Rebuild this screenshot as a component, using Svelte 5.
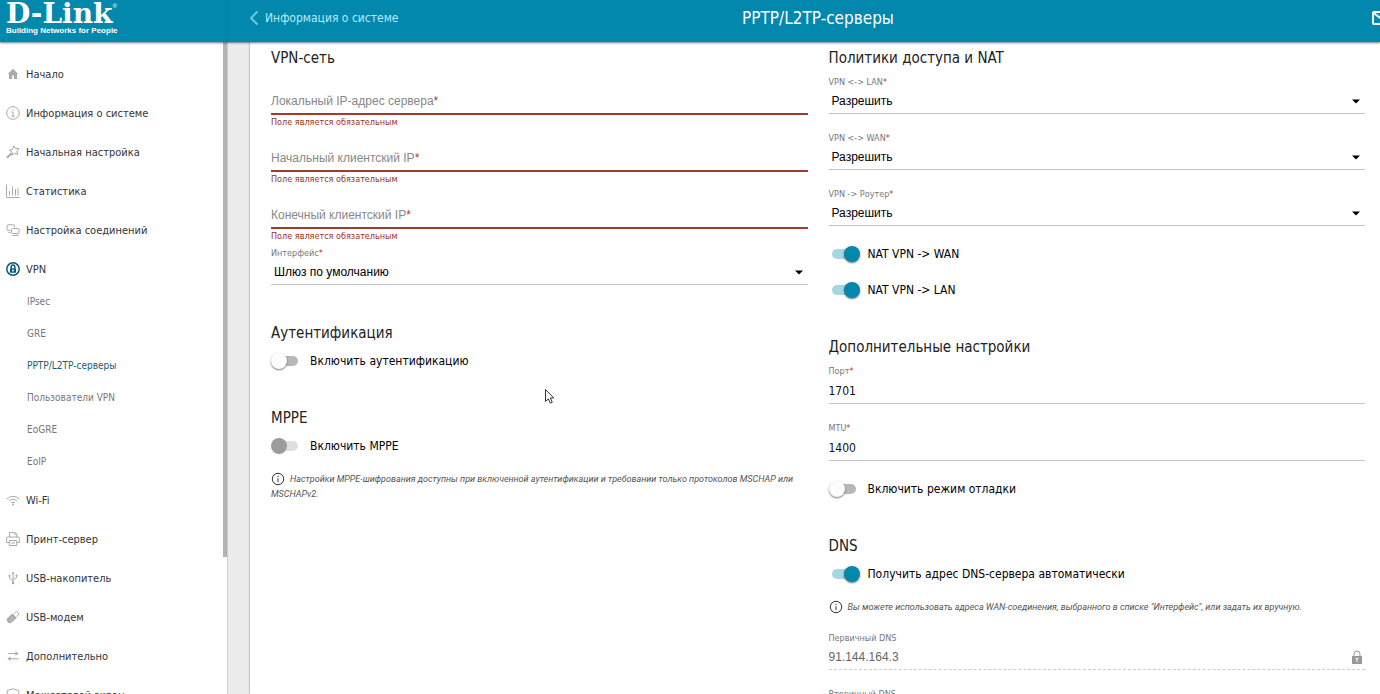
<script>
  const menu = [
    { text: 'Начало', icon: 'home' },
    { text: 'Информация о системе', icon: 'info' },
    { text: 'Начальная настройка', icon: 'wand' },
    { text: 'Статистика', icon: 'stats' },
    { text: 'Настройка соединений', icon: 'links' },
    {
      text: 'VPN',
      icon: 'vpn',
      children: ['IPsec', 'GRE', 'PPTP/L2TP-серверы', 'Пользователи VPN', 'EoGRE', 'EoIP']
    },
    { text: 'Wi-Fi', icon: 'wifi' },
    { text: 'Принт-сервер', icon: 'printer' },
    { text: 'USB-накопитель', icon: 'usb' },
    { text: 'USB-модем', icon: 'modem' },
    { text: 'Дополнительно', icon: 'arrows' },
    { text: 'Межсетевой экран', icon: 'shield' }
  ];
  const current = 'PPTP/L2TP-серверы';

  const addresses = $state([
    { id: 'local-ip', label: 'Локальный IP-адрес сервера', value: '' },
    { id: 'first-ip', label: 'Начальный клиентский IP', value: '' },
    { id: 'last-ip', label: 'Конечный клиентский IP', value: '' }
  ]);
  const policies = [
    { id: 'lan', label: 'VPN <-> LAN' },
    { id: 'wan', label: 'VPN <-> WAN' },
    { id: 'router', label: 'VPN -> Роутер' }
  ];
</script>

{#snippet icon(name)}
  <svg class="icon" class:accent={name === 'vpn'} viewBox="0 0 14 14" aria-hidden="true">
    {#if name === 'home'}
      <path class="solid" d="M7 1.8 1.8 7H3v5h3V8.5h2V12h3V7h1.2z" />
    {:else if name === 'info'}
      <circle cx="7" cy="7" r="6.3" />
      <path d="M5.5 6H7v4.2M5.3 10.2h3.6M6.4 3.8h1.2" />
    {:else if name === 'wand'}
      <path d="m8 .8 1.500 2.500 3.500.2-2.200 2.700.9 3.200-3.100-1.100-2.600 2 .2-3.200L3.500 5.200l3.100-1z" />
      <path class="thick" d="M5.600 8.300 1 12.800" />
    {:else if name === 'stats'}
      <path d="M.5.5v13h13M3.5 7v4.5M6.5 2.5v9M9.5 5v6.500M12 4v7.500" />
    {:else if name === 'links'}
      <path d="M4.500 7.500H2.200A1.200 1.200 0 0 1 1 6.300V3a1.200 1.200 0 0 1 1.200-1.200h5A1.200 1.200 0 0 1 8.400 3v1M2.500 9.500h2" />
      <rect x="5.500" y="5.500" width="7.500" height="5" rx="1" />
      <path d="M6.500 12.500h6" />
    {:else if name === 'vpn'}
      <circle cx="7" cy="7" r="6.200" />
      <rect class="solid" x="4" y="6.300" width="6" height="4.500" rx=".6" />
      <path d="M5.200 6.500V4.800a1.800 1.800 0 0 1 3.600 0v1.700" />
      <path class="light" d="M7 7.500v2" />
    {:else if name === 'wifi'}
      <path d="M1 5.800a8.600 8.600 0 0 1 12 0M3 7.900a5.800 5.800 0 0 1 8 0M5 9.900a3 3 0 0 1 4 0" />
      <circle class="solid" cx="7" cy="11.500" r="1" />
    {:else if name === 'printer'}
      <path d="M3.500 5V.6h5.800l1.500 1.500V5M3 10.500H.6V6.200A1.200 1.200 0 0 1 1.800 5h10.400a1.200 1.200 0 0 1 1.200 1.200v4.300H11M3.300 8.500h7.400v5H3.300zM5 11h4M9 .8v1.500h1.600" />
    {:else if name === 'usb'}
      <path d="M7 1.500v10M3.500 5v2.200L7 9.800M10.500 4.500v2.200L7 8.500" />
      <path class="solid" d="M7 .5 5.700 2.700h2.600zM2.700 3.800h1.700v1.700H2.700zM9.700 3.500h1.700v1.700H9.700z" />
      <circle class="solid" cx="7" cy="12" r="1.300" />
    {:else if name === 'modem'}
      <path class="solid" d="M.8 8.700 6.500 3.500l4.200 4.200-5.800 5.300c-1.700 1.200-5.200-2.500-4.100-4.300z" />
      <path d="m8 3.800 2.600-2.500 2.600 2.700-2.700 2.500" />
      <path class="light" d="M3.700 9.700 4.700 10.700M5.700 7.500l1 1" />
    {:else if name === 'arrows'}
      <path d="M2 4.500h9M3 9.800h9.500" />
      <path class="solid" d="M9.500 2.200 12.500 4.500 9.500 6.800zM4.500 7.500 1.500 9.800l3 2.300z" />
    {:else if name === 'shield'}
      <path d="M7 .8 12.800 2.500c.3 5-1.200 8.500-5.800 10.700C2.400 11 .9 7.500 1.200 2.500z" />
    {/if}
  </svg>
{/snippet}

{#snippet caret()}
  <svg class="caret" viewBox="0 0 8 5" aria-hidden="true"><path d="M0 .5h8L4 4.500z" /></svg>
{/snippet}

{#snippet note(text)}
  <p class="note">
    <svg viewBox="0 0 14 14" aria-hidden="true">
      <circle cx="7" cy="7" r="5.700" />
      <path d="M7 6.300v3.900M7 3.800v1.400" />
    </svg>{text}
  </p>
{/snippet}

{#snippet toggle(text, checked, disabled = false)}
  <label class="toggle"><input type="checkbox" {checked} {disabled} /><span>{text}</span></label>
{/snippet}

<div class="page">
  <header>
    <a class="brand" href="#home">
      <span class="logo">D-Link<sup>®</sup></span>
      <span class="slogan">Building Networks for People</span>
    </a>
    <div class="bar">
      <a class="back" href="#system">
        <svg viewBox="0 0 10 16" aria-hidden="true"><path d="M8.500 1.500 2 8l6.500 6.500" /></svg>
        Информация о системе
      </a>
      <h1>PPTP/L2TP-серверы</h1>
      <button class="mail" aria-label="Уведомления">
        <svg viewBox="0 0 18 14" aria-hidden="true"><rect x="1" y="1" width="16" height="12" rx="1" /><path d="m1.500 2 7.500 5.500L16.500 2" /></svg>
      </button>
    </div>
  </header>

  <div class="body">
    <nav>
      <ul class="menu">
        {#each menu as item}
          <li>
            <a href="#{item.icon}">{@render icon(item.icon)}{item.text}</a>
            {#if item.children}
              <ul class="submenu">
                {#each item.children as child}
                  <li><a href="#{item.icon}" class:current={child === current}>{child}</a></li>
                {/each}
              </ul>
            {/if}
          </li>
        {/each}
      </ul>
      <div class="thumb"></div>
    </nav>

    <main>
      <div class="column">
        <section class="network">
          <h2>VPN-сеть</h2>
          <div class="addresses">
            {#each addresses as field}
              <div class="address">
                <div class="stack">
                  <input id={field.id} type="text" bind:value={field.value} />
                  {#if !field.value}
                    <label for={field.id}>{field.label}<b>*</b></label>
                  {/if}
                </div>
                <p class="error">Поле является обязательным</p>
              </div>
            {/each}
          </div>
          <div class="field">
            <label for="interface">Интерфейс<b>*</b></label>
            <div class="select">
              <select id="interface"><option>Шлюз по умолчанию</option></select>
              {@render caret()}
            </div>
          </div>
        </section>
        <section>
          <h2>Аутентификация</h2>
          {@render toggle('Включить аутентификацию', false)}
        </section>
        <section>
          <h2>MPPE</h2>
          {@render toggle('Включить MPPE', false, true)}
          {@render note('Настройки MPPE-шифрования доступны при включенной аутентификации и требовании только протоколов MSCHAP или MSCHAPv2.')}
        </section>
      </div>

      <div class="column">
        <section>
          <h2>Политики доступа и NAT</h2>
          <div class="fields">
            {#each policies as policy}
              <div class="field">
                <label for={policy.id}>{policy.label}<b>*</b></label>
                <div class="select">
                  <select id={policy.id}><option>Разрешить</option></select>
                  {@render caret()}
                </div>
              </div>
            {/each}
          </div>
          <div class="toggles">
            {@render toggle('NAT VPN -> WAN', true)}
            {@render toggle('NAT VPN -> LAN', true)}
          </div>
        </section>
        <section>
          <h2>Дополнительные настройки</h2>
          <div class="fields">
            <div class="field">
              <label for="port">Порт<b>*</b></label>
              <input id="port" type="text" value="1701" />
            </div>
            <div class="field">
              <label for="mtu">MTU<b>*</b></label>
              <input id="mtu" type="text" value="1400" />
            </div>
          </div>
          <div class="toggles">
            {@render toggle('Включить режим отладки', false)}
          </div>
        </section>
        <section>
          <h2>DNS</h2>
          {@render toggle('Получить адрес DNS-сервера автоматически', true)}
          {@render note('Вы можете использовать адреса WAN-соединения, выбранного в списке "Интерфейс", или задать их вручную.')}
          <div class="fields dns">
            <div class="field">
              <label for="dns1">Первичный DNS</label>
              <div class="locked">
                <input id="dns1" type="text" value="91.144.164.3" readonly />
                <svg viewBox="0 0 12 14" aria-hidden="true">
                  <path d="M3 6V4a3 3 0 0 1 6 0v2" />
                  <rect x="1" y="6" width="10" height="8" />
                  <path class="hole" d="M4.500 8.500h3M6 8.500V12" />
                </svg>
              </div>
            </div>
            <div class="field">
              <label for="dns2">Вторичный DNS</label>
              <div class="locked">
                <input id="dns2" type="text" value="" readonly />
              </div>
            </div>
          </div>
        </section>
      </div>
    </main>
  </div>

  <svg class="pointer" viewBox="0 0 12 18" aria-hidden="true">
    <path d="M1.500 1.500v12l2.800-2.600 2 4.300 2-1-2-4.200h3.500z" />
  </svg>
</div>

<style>
  :global(body) {
    margin: 0;
  }
  .page {
    display: flex;
    flex-direction: column;
    position: relative;
    height: 100vh;
    overflow: hidden;
    background: #ececec;
    color: #111;
    font-family: 'DejaVu Sans Condensed', 'DejaVu Sans', sans-serif;
    font-size: 12px;
  }
  h1,
  h2,
  p,
  ul {
    margin: 0;
    padding: 0;
    font-weight: 400;
  }
  ul {
    list-style: none;
  }
  a {
    color: inherit;
    text-decoration: none;
  }
  button,
  input,
  select {
    margin: 0;
    padding: 0;
    border: 0;
    border-radius: 0;
    outline: 0;
    background: none;
    color: inherit;
    font: inherit;
  }
  svg {
    fill: none;
    stroke: currentColor;
    flex: none;
  }

  header {
    display: flex;
    flex: none;
    height: 42px;
    background: #0288ad;
    color: #fff;
    box-shadow: 0 1px 2px rgb(0 40 60 / 60%);
    z-index: 2;
  }
  .brand {
    display: flex;
    flex-direction: column;
    box-sizing: border-box;
    width: 228px;
    padding-left: 6px;
    border-right: 1px solid #047b9e;
  }
  .logo {
    height: 24px;
    font: 700 28px/28px 'DejaVu Serif', serif;
  }
  .logo sup {
    font: 6px/6px 'Liberation Sans', sans-serif;
    vertical-align: 15px;
  }
  .slogan {
    font: 700 8px/13px 'Liberation Sans', sans-serif;
  }
  .bar {
    display: grid;
    grid-template-columns: 1fr auto 1fr;
    align-items: center;
    flex: 1;
    padding-left: 21px;
    padding-bottom: 6px;
    overflow: hidden;
  }
  .back {
    display: flex;
    align-items: center;
    gap: 6px;
    color: #b4ecfb;
    font-size: 12px;
  }
  .back svg {
    width: 10px;
    height: 16px;
    stroke: #6cc6e2;
    stroke-width: 2;
  }
  h1 {
    margin-left: 7px;
    font-size: 17px;
    line-height: 24px;
  }
  .mail {
    justify-self: end;
    display: flex;
    margin-right: -10px;
  }
  .mail svg {
    width: 18px;
    height: 14px;
    stroke-width: 2;
  }

  .body {
    display: flex;
    flex: 1;
    min-height: 0;
  }
  nav {
    display: flex;
    justify-content: space-between;
    align-items: flex-start;
    box-sizing: border-box;
    width: 228px;
    flex: none;
    background: #fff;
    border-right: 1px solid #ccc;
    color: #333;
    font-size: 11px;
  }
  .thumb {
    width: 4px;
    height: 79%;
    background: #b4b4b4;
  }
  .menu {
    display: flex;
    flex-direction: column;
    gap: 7px;
    padding: 16px 0 0 6px;
  }
  .menu a {
    display: flex;
    align-items: center;
    gap: 6px;
    height: 32px;
  }
  .submenu {
    padding-left: 21px;
    color: #777;
    font-size: 10px;
  }
  .submenu .current {
    color: #14606f;
  }
  .icon {
    width: 14px;
    height: 14px;
    color: #aaa;
  }
  .accent {
    color: #075a76;
    stroke-width: 1.500;
  }
  .solid {
    fill: currentColor;
    stroke: none;
  }
  .light {
    stroke: #fff;
  }
  .thick {
    stroke-width: 2;
  }

  main {
    display: grid;
    grid-template-columns: 1fr 1fr;
    gap: 21px;
    flex: 1;
    margin-left: 22px;
    padding: 4px 15px 0 21px;
    background: #fff;
    box-shadow: 0 0 2px rgb(0 0 0 / 45%);
  }
  .column {
    display: flex;
    flex-direction: column;
    gap: 33px;
    min-width: 0;
  }
  .network {
    padding-bottom: 3px;
  }
  h2 {
    margin-bottom: 4px;
    font-size: 15px;
    line-height: 24px;
    color: #222;
  }
  b {
    color: #b5382c;
    font-weight: 400;
  }
  .addresses {
    display: flex;
    flex-direction: column;
    gap: 16px;
    padding: 15px 0 2px;
  }
  .stack {
    display: grid;
    border-bottom: 2px solid #a03c2c;
  }
  .stack > * {
    grid-area: 1 / 1;
    font: 12px/24px 'Liberation Sans', sans-serif;
    height: 24px;
  }
  .stack label {
    color: #888;
    pointer-events: none;
  }
  .error {
    font-size: 9px;
    line-height: 15px;
    color: #993322;
  }
  .fields {
    display: flex;
    flex-direction: column;
    gap: 17px;
    padding-top: 1px;
  }
  .field {
    display: flex;
    flex-direction: column;
  }
  .field > label {
    font-size: 9px;
    line-height: 14px;
    color: #777;
  }
  .field > input,
  .locked,
  .select {
    height: 25px;
    border-bottom: 1px solid #c4c4c4;
    font-size: 12px;
  }
  .select,
  .locked {
    display: flex;
    align-items: center;
    height: 24px;
    font-family: 'Liberation Sans', sans-serif;
  }
  .select {
    padding-right: 5px;
    color: #000;
  }
  .select select {
    appearance: none;
    flex: 1;
    padding-left: 3px;
  }
  .caret {
    width: 8px;
    height: 5px;
    fill: #000;
    stroke: none;
  }
  .locked {
    border-bottom: 1px dashed #ccc;
    padding-right: 2px;
    color: #666;
  }
  .locked input {
    flex: 1;
  }
  .locked svg {
    width: 12px;
    height: 14px;
    stroke: #999;
  }
  .locked rect {
    fill: #999;
    stroke: none;
  }
  .locked .hole {
    stroke: #fff;
  }
  .toggles {
    display: flex;
    flex-direction: column;
    gap: 12px;
    padding-top: 16px;
  }
  .toggle {
    display: flex;
    align-items: center;
    gap: 8px;
    height: 24px;
    font-size: 12px;
    color: #000;
  }
  .toggle input {
    appearance: none;
    display: grid;
    align-items: center;
    width: 31px;
    height: 18px;
  }
  .toggle input::before,
  .toggle input::after {
    content: '';
    grid-area: 1 / 1;
  }
  .toggle input::before {
    width: 24px;
    height: 10px;
    margin-left: 3px;
    border-radius: 5px;
    background: #b8b8b8;
  }
  .toggle input::after {
    width: 16px;
    height: 16px;
    border-radius: 50%;
    background: #fdfdfd;
    box-shadow: 0 1px 2px rgb(0 0 0 / 55%);
  }
  .toggle input:checked::before {
    background: #a5d6e2;
  }
  .toggle input:checked::after {
    justify-self: end;
    background: #0288ad;
  }
  .toggle input:disabled::before {
    background: #dedede;
  }
  .toggle input:disabled::after {
    background: #9c9c9c;
    box-shadow: none;
  }
  .note {
    padding-top: 14px;
    font-family: Roboto, sans-serif;
    font-size: 9px;
    font-style: italic;
    line-height: 15px;
    color: #555;
  }
  .note svg {
    width: 14px;
    height: 14px;
    margin-right: 5px;
    vertical-align: -4px;
    stroke: #333;
  }
  .dns {
    padding-top: 16px;
  }
  .pointer {
    position: absolute;
    left: 544px;
    top: 388px;
    width: 12px;
    height: 18px;
    fill: #fff;
    stroke: #333;
  }
</style>
